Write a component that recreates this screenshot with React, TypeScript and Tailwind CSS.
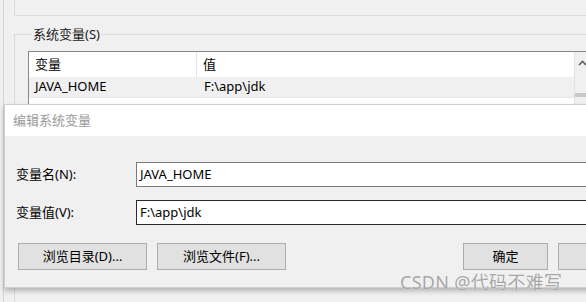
import React from 'react';

const FONT = '"Noto Sans", "Noto Sans CJK SC", sans-serif';

const Button = ({ label, width }: { label: string; width: string }) => (
  <div
    className={`${width} h-[27px] shrink-0 flex items-center justify-center bg-[#e1e1e1] border border-[#adadad] text-[13px] text-black`}
  >
    {label}
  </div>
);

export default function App() {
  return (
    <div
      className="relative w-[586px] h-[302px] overflow-hidden bg-[#f0f0f0] text-black"
      style={{ fontFamily: FONT }}
    >
      {/* window behind the dialog */}
      <div className="ml-[3px] h-full border-l border-[#d4d4d4] pl-[10px]">
        <div className="h-[16px] border-l border-b border-[#dcdcdc]" />
        <fieldset className="mt-[12px] border-t border-l border-[#dcdcdc] pl-[13px] pt-0 h-[300px]">
          <legend className="ml-[4px] px-[1px] text-[13px] leading-[13px] text-[#1a1a1a]">系统变量(S)</legend>
          <div className="mt-[10px] h-[53px] overflow-hidden flex border-t border-l border-[#828790] bg-white">
            <div className="flex-1 text-[13px]">
              <div className="flex h-[25px] items-center bg-white">
                <div className="w-[168px] pl-[6px] border-r border-[#e5e5e5] h-full flex items-center">变量</div>
                <div className="pl-[6px]">值</div>
              </div>
              <div className="flex h-[21px] items-center bg-[#f0f0f0] border-b border-[#e8e8e8]">
                <div className="w-[168px] pl-[6px]">JAVA_HOME</div>
                <div className="pl-[7px]">F:\app\jdk</div>
              </div>
              <div className="flex h-[21px] items-center bg-white">
                <div className="w-[168px] pl-[6px] tracking-[1px]">NUMBER_OF_PROCESSORS</div>
                <div className="pl-[7px]">4</div>
              </div>
            </div>
            <div className="w-[12px] bg-[#f0f0f0] border-l border-[#e2e2e2] flex flex-col items-center">
              <svg width="9" height="6" viewBox="0 0 9 6" className="mt-[8px] ml-[3px]">
                <path d="M1 5 L4.5 1.5 L8 5" stroke="#606060" strokeWidth="1.6" fill="none" />
              </svg>
              <div className="mt-[27px] w-full h-[4px] bg-[#c8c8c8]" />
            </div>
          </div>
        </fieldset>
      </div>

      {/* dialog */}
      <div className="absolute left-[4px] top-[104px] w-[600px] h-[184px] border border-[#cfcfcf] bg-[#f0f0f0] shadow-[0_3px_5px_rgba(0,0,0,0.25)]">
        <div className="h-[31px] bg-white flex items-center pl-[8px] text-[13px] text-[#9a9a9a]">编辑系统变量</div>
        <div className="pt-[26px] pl-[11px]">
          <div className="flex items-center h-[25px]">
            <div className="w-[120px] text-[13px]">变量名(N):</div>
            <div className="flex-1 h-[25px] bg-white border border-[#7a7a7a] flex items-center pl-[3px] text-[13px]">JAVA_HOME</div>
          </div>
          <div className="flex items-center h-[25px] mt-[13px]">
            <div className="w-[120px] text-[13px]">变量值(V):</div>
            <div className="flex-1 h-[25px] bg-white border border-[#2a2a2a] flex items-center pl-[3px] text-[13px]">F:\app\jdk</div>
          </div>
          <div className="flex mt-[18px] pl-[2px]">
            <Button label="浏览目录(D)..." width="w-[129px]" />
            <div className="w-[10px] shrink-0" />
            <Button label="浏览文件(F)..." width="w-[129px]" />
            <div className="w-[177px] shrink-0" />
            <Button label="确定" width="w-[85px]" />
            <div className="w-[10px] shrink-0" />
            <Button label="" width="w-[85px]" />
          </div>
        </div>
      </div>

      {/* watermark */}
      <div className="absolute left-[400px] top-[271px] text-[18px] leading-[22px] tracking-[0.3px] text-[#a6a6a6] whitespace-nowrap [text-shadow:0_0_1px_#fff]">
        CSDN @代码不难写
      </div>
    </div>
  );
}
